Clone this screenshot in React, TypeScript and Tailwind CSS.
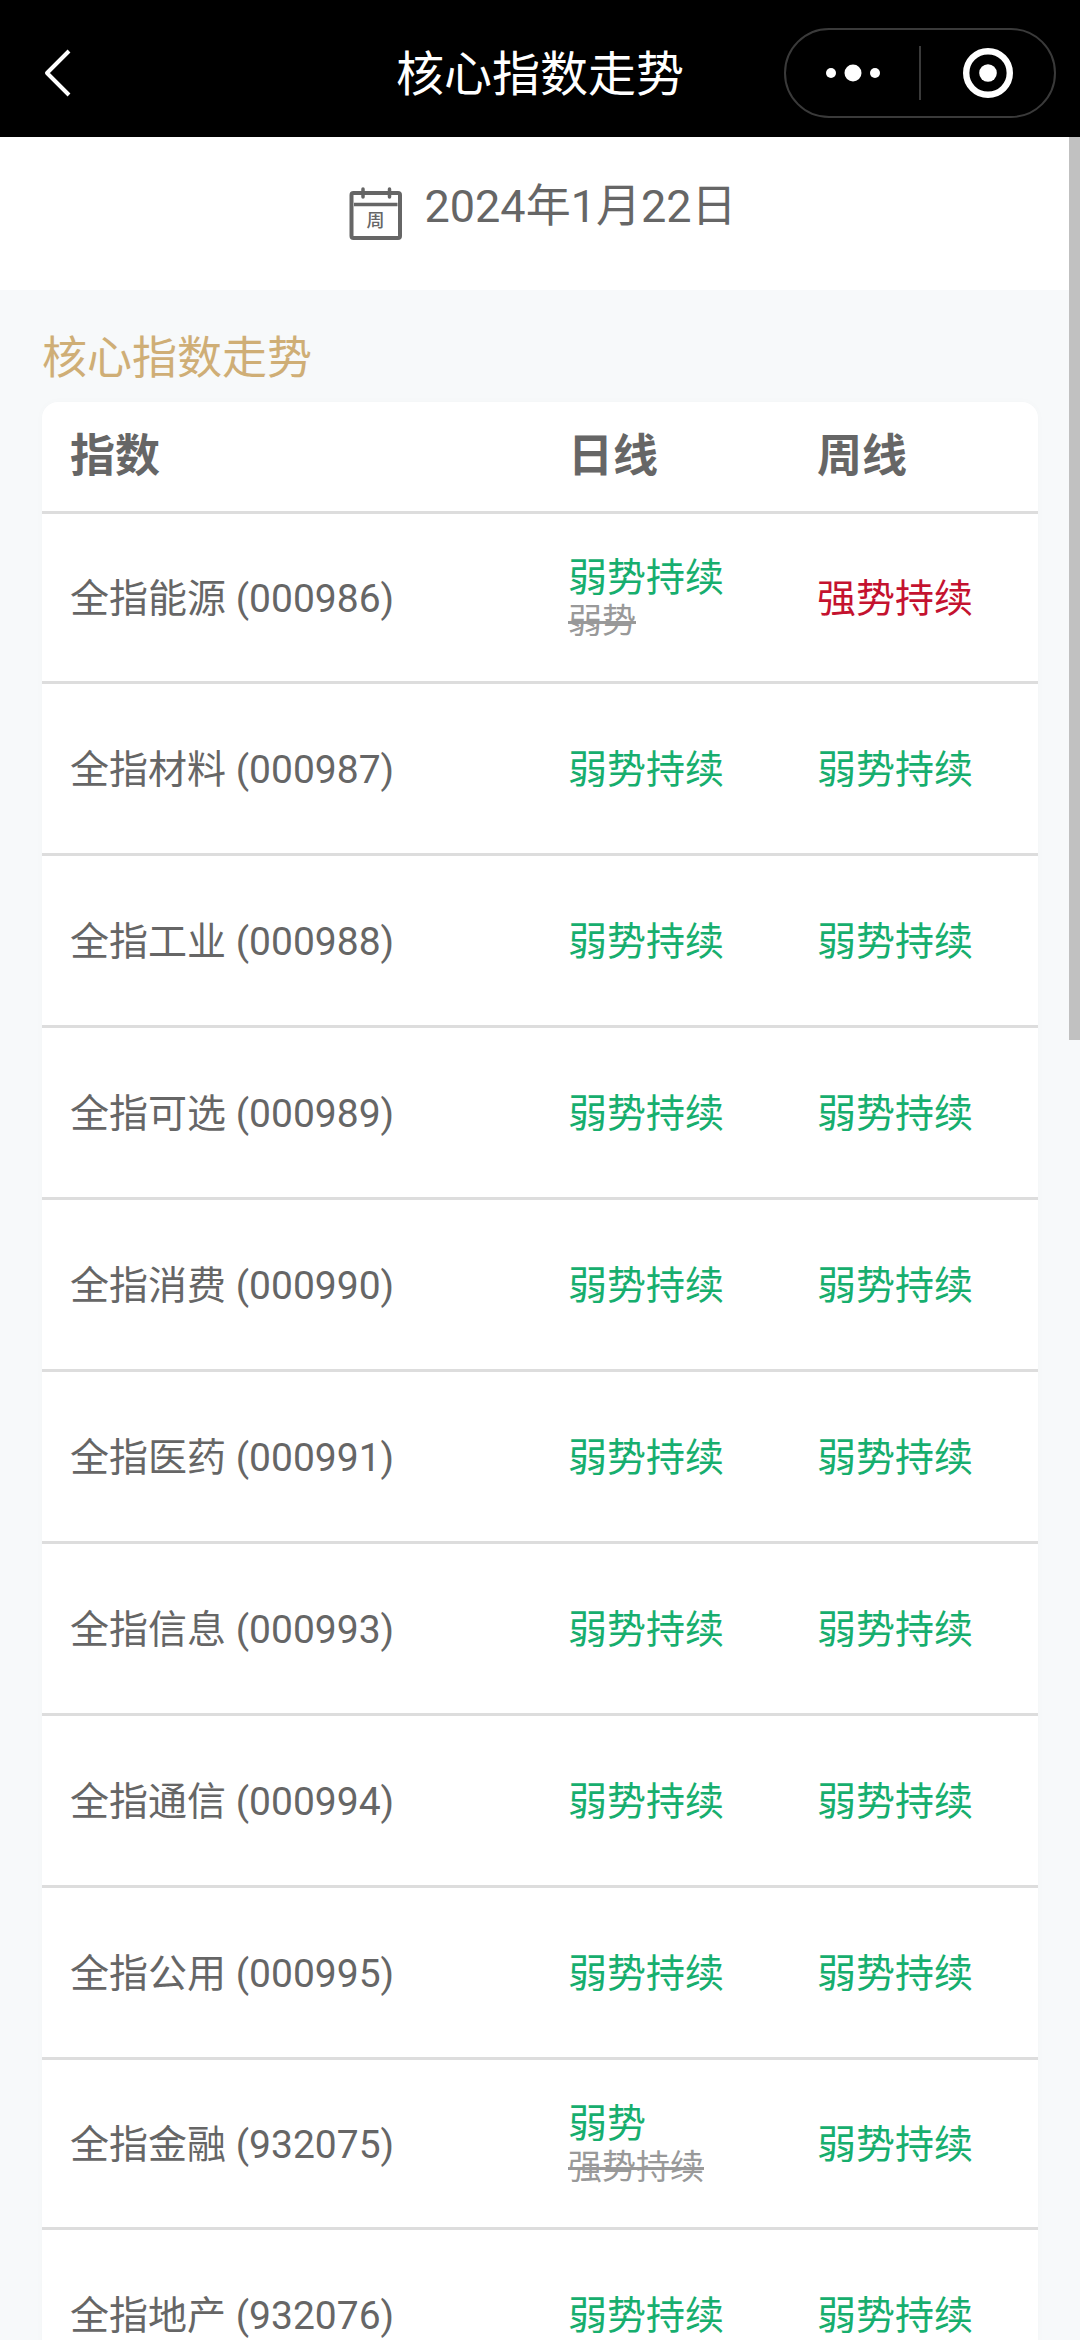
import { clsx } from "clsx";

type Trend = "强势" | "强势持续" | "弱势" | "弱势持续";

interface IndexRow {
  name: string;
  code: string;
  day: Trend;
  prevDay?: Trend;
  week: Trend;
}

const rows: IndexRow[] = [
  { name: "全指能源", code: "000986", day: "弱势持续", prevDay: "弱势", week: "强势持续" },
  { name: "全指材料", code: "000987", day: "弱势持续", week: "弱势持续" },
  { name: "全指工业", code: "000988", day: "弱势持续", week: "弱势持续" },
  { name: "全指可选", code: "000989", day: "弱势持续", week: "弱势持续" },
  { name: "全指消费", code: "000990", day: "弱势持续", week: "弱势持续" },
  { name: "全指医药", code: "000991", day: "弱势持续", week: "弱势持续" },
  { name: "全指信息", code: "000993", day: "弱势持续", week: "弱势持续" },
  { name: "全指通信", code: "000994", day: "弱势持续", week: "弱势持续" },
  { name: "全指公用", code: "000995", day: "弱势持续", week: "弱势持续" },
  { name: "全指金融", code: "932075", day: "弱势", prevDay: "强势持续", week: "弱势持续" },
  { name: "全指地产", code: "932076", day: "弱势持续", week: "弱势持续" },
];

export default function App() {
  return (
    <div className="flex h-screen flex-col overflow-hidden bg-[#f7f9fa] font-['Roboto','Noto_Sans_CJK_SC',sans-serif] text-[#666]">
      <NavBar title="核心指数走势" />
      <div className="relative min-h-0 flex-1">
        <main className="h-full overflow-y-auto [scrollbar-width:none]">
          <DateBar date="2024年1月22日" />
          <section className="px-[42px] pt-9">
            <h2 className="mb-[10px] text-[45px] leading-[66px] text-[#cfae76]">核心指数走势</h2>
            <TrendTable rows={rows} />
          </section>
        </main>
        {/* scroll thumb */}
        <div className="absolute top-0 right-0 h-[41%] w-[11px] bg-[#c1c1c1]" />
      </div>
    </div>
  );
}

function NavBar({ title }: { title: string }) {
  return (
    <header className="grid shrink-0 grid-cols-[1fr_auto_1fr] items-center bg-black px-6 pt-7 pb-[19px] text-white">
      <button aria-label="返回" className="flex w-[68px] cursor-pointer justify-center">
        <svg width="44" height="50" viewBox="0 0 44 50" fill="none" stroke="currentColor" strokeWidth="4">
          <path d="M33 3 L11 25 L33 47" strokeLinejoin="round" />
        </svg>
      </button>
      <h1 className="pt-1 text-5xl">{title}</h1>
      <div className="flex h-[90px] w-[272px] items-center justify-self-end rounded-full border-2 border-[#3a3a3a]">
        <button aria-label="更多" className="flex h-full flex-1 cursor-pointer items-center justify-center">
          <svg width="54" height="18" viewBox="0 0 54 18" fill="currentColor">
            <circle cx="5" cy="9" r="5" />
            <circle cx="27" cy="9" r="8.5" />
            <circle cx="49" cy="9" r="5" />
          </svg>
        </button>
        <span className="h-[54px] w-0.5 bg-[#3a3a3a]" />
        <button aria-label="关闭" className="flex h-full flex-1 cursor-pointer items-center justify-center">
          <svg width="50" height="50" viewBox="0 0 50 50">
            <circle cx="25" cy="25" r="21.8" fill="none" stroke="currentColor" strokeWidth="6.4" />
            <circle cx="25" cy="25" r="8.8" fill="currentColor" />
          </svg>
        </button>
      </div>
    </header>
  );
}

function DateBar({ date }: { date: string }) {
  return (
    <div className="flex h-[153px] justify-center bg-white pt-[38px] pl-1.5">
      <button className="flex cursor-pointer items-start gap-[22px]">
        <CalendarIcon />
        <span className="text-[45px] leading-[64px]">{date}</span>
      </button>
    </div>
  );
}

function CalendarIcon() {
  return (
    <svg className="mt-3" width="53" height="53" viewBox="0 0 53 53" fill="none" stroke="currentColor">
      <rect x="2.5" y="6" width="48.5" height="45" rx="2" strokeWidth="4" />
      <path d="M5 17.5 H48.5" strokeWidth="3.5" />
      <path d="M14 2 V10 M40.5 2 V10" strokeWidth="3.5" strokeLinecap="round" />
      <text x="26.5" y="39.5" textAnchor="middle" fontSize="18" fontWeight="500" fill="currentColor" stroke="none">
        周
      </text>
    </svg>
  );
}

const cell = "border-b-[3px] border-[#ddd] px-7 align-middle whitespace-nowrap";

function TrendTable({ rows }: { rows: IndexRow[] }) {
  return (
    <table className="w-full table-fixed border-separate border-spacing-0 rounded-t-2xl bg-white shadow-[0_0_10px_rgba(0,0,0,0.02)]">
      <thead>
        <tr className="h-[112px] text-left text-[45px] leading-[60px]">
          <th className={clsx(cell, "w-1/2")}>指数</th>
          <th className={clsx(cell, "w-1/4")}>日线</th>
          <th className={clsx(cell, "w-1/4")}>周线</th>
        </tr>
      </thead>
      <tbody>
        {rows.map((row) => (
          <tr key={row.code} className={clsx("text-[39px] leading-[43px]", row.prevDay ? "h-[170px]" : "h-[172px]")}>
            <td className={clsx(cell, "pt-1")}>
              {row.name} ({row.code})
            </td>
            <td className={clsx(cell, "pt-1")}>
              <TrendText trend={row.day} />
              {row.prevDay && <del className="block text-[34px] text-[#999]">{row.prevDay}</del>}
            </td>
            <td className={clsx(cell, "pt-1")}>
              <TrendText trend={row.week} />
            </td>
          </tr>
        ))}
      </tbody>
    </table>
  );
}

function TrendText({ trend }: { trend: Trend }) {
  return (
    <span className={clsx("block", trend.startsWith("强") ? "text-[#c4122f]" : "text-[#17ae6e]")}>
      {trend}
    </span>
  );
}
